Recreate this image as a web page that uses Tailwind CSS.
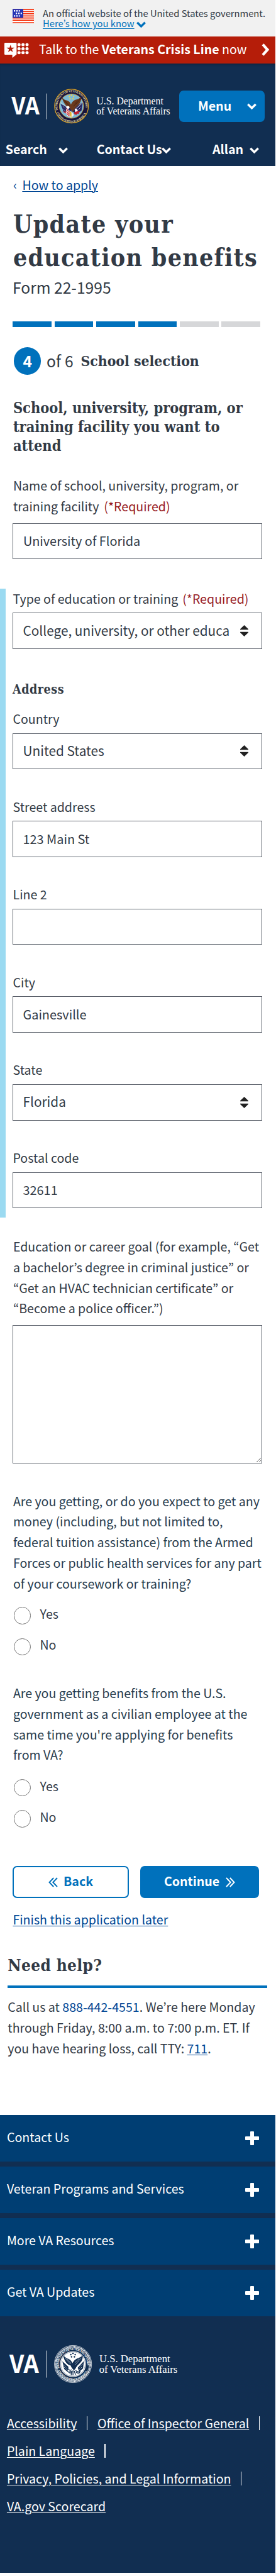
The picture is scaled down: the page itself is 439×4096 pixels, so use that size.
<!DOCTYPE html>
<html lang="en">
<head>
<meta charset="utf-8">
<title>Update your education benefits</title>
<script src="https://cdn.jsdelivr.net/npm/@tailwindcss/browser@4"></script>
</head>
<body class="bg-white">
<svg width="0" height="0" class="absolute">
  <symbol id="chev" viewBox="0 0 15 10"><path d="M1.3 1.7 7.5 7.9 13.7 1.7" fill="none" stroke="currentColor" stroke-width="3.4"/></symbol>
  <symbol id="sort" viewBox="0 0 13 18"><path d="M6.5 0 13 6.2V7.2H0V6.2ZM6.5 18 0 11.8V10.8H13V11.8Z" fill="#212121"/></symbol>
  <symbol id="plus" viewBox="0 0 22 22"><path d="M9 0h4a1 1 0 0 1 1 1v7h7a1 1 0 0 1 1 1v4a1 1 0 0 1-1 1h-7v7a1 1 0 0 1-1 1H9a1 1 0 0 1-1-1v-7H1a1 1 0 0 1-1-1V9a1 1 0 0 1 1-1h7V1a1 1 0 0 1 1-1Z" fill="#fff"/></symbol>
</svg>
<div class="flex h-[4096px] w-[437.6px] flex-col overflow-hidden bg-white text-[19.6px] leading-[32.8px] text-[#323a45] [font-family:'Noto_Sans_CJK_KR','Noto_Sans_CJK_SC',sans-serif]">

  <!-- Government banner -->
  <div class="flex h-[57.5px] shrink-0 gap-[14px] bg-[#f1f1f1] pl-[20px]">
    <svg class="mt-[13.5px] h-[23px] w-[34px] shrink-0" viewBox="0 0 34 23">
      <rect width="34" height="23" fill="#fff"/>
      <path d="M0 .9h34M0 4.4h34M0 7.9h34M0 11.4h34M0 14.7h34M0 18.2h34M0 22h34" stroke="#f42c06" stroke-width="1.7"/>
      <rect y=".2" width="17" height="14.2" fill="#2433b5"/>
      <path d="M2 3.2h9.6M5 7.3h9.8M2 11.4h9.6" stroke="#fff" stroke-width="2.4" stroke-dasharray="2.2 1.7" fill="none"/>
    </svg>
    <div class="pt-[12.6px] text-[14.76px] leading-[16.2px] whitespace-nowrap">
      <p>An official website of the United States government.</p>
      <p class="flex items-center gap-[3px] text-[#0071bc]"><a class="underline decoration-[1.4px] underline-offset-2">Here’s how you know</a><svg class="mt-[4px] h-[10px] w-[15px]"><use href="#chev"/></svg></p>
    </div>
  </div>

  <!-- Crisis line -->
  <div class="flex h-[43.7px] shrink-0 items-center bg-[#b51d09] pl-[6.7px] text-white">
    <svg class="mt-[1px] h-[24px] w-[39px]" viewBox="0 0 39 24">
      <path d="M1.2 0h17a1.2 1.2 0 0 1 1.2 1.2V18.5L12.6 24V19H1.2A1.2 1.2 0 0 1 0 17.8V1.2A1.2 1.2 0 0 1 1.2 0Z" fill="#fff"/>
      <path d="M9.7 3.3 11.2 7.7H15.9L12.1 10.5 13.5 15 9.7 12.3 5.9 15 7.3 10.5 3.5 7.7H8.2Z" fill="#b51d09"/>
      <g fill="#fff"><circle cx="23.2" cy="3" r="2.5"/><circle cx="29.6" cy="3" r="2.5"/><circle cx="36" cy="3" r="2.5"/><circle cx="23.2" cy="9.4" r="2.5"/><circle cx="29.6" cy="9.4" r="2.5"/><circle cx="36" cy="9.4" r="2.5"/><circle cx="23.2" cy="15.8" r="2.5"/><circle cx="29.6" cy="15.8" r="2.5"/><circle cx="36" cy="15.8" r="2.5"/></g>
    </svg>
    <p class="-mt-[1px] ml-[16.3px] whitespace-nowrap">Talk to the <b>Veterans Crisis Line</b> now</p>
    <svg class="mr-[8.5px] ml-auto h-[20px] w-[13px]" viewBox="0 0 13 20"><path d="M2 1.6 9.5 10 2 18.4" fill="none" stroke="#fff" stroke-width="4.2"/></svg>
  </div>

  <!-- Header -->
  <header class="flex h-[162.8px] shrink-0 flex-col bg-[#112e51] font-bold text-white shadow-[inset_0_4px_4px_-3px_rgba(0,0,0,0.3)]">
    <div class="flex items-start pt-[37px]">
      <svg class="h-[60px] w-[284.5px] shrink-0" viewBox="0 137 284.5 60">
        <defs>
          <path id="ringTop" d="M-21.6 6.5A22.5 22.5 0 1 1 21.6 6.5"/>
          <path id="ringBot" d="M-25.3 5.5A25.8 25.8 0 0 0 25.3 5.5"/>
        </defs>
        <text x="18.2" y="181.3" font-size="38" font-weight="700" fill="#fff" textLength="44.6" lengthAdjust="spacingAndGlyphs">VA</text>
        <path d="M73.7 147.7V188.6" stroke="#fff" stroke-opacity=".75" stroke-width="1"/>
        <g transform="translate(113.7 167.7)">
          <circle r="27.9" fill="#17143f"/>
          <circle r="26.9" fill="none" stroke="#d6a72a" stroke-width="1.3"/>
          <circle r="19.3" fill="#7db9d6" stroke="#c9a13b" stroke-width=".9"/>
          <g font-family="'Liberation Serif'" font-size="5" font-weight="700" fill="#d9cf9a">
            <text><textPath href="#ringTop" textLength="79">DEPARTMENT OF VETERANS AFFAIRS</textPath></text>
            <text><textPath href="#ringBot" startOffset="5" textLength="59">UNITED STATES OF AMERICA</textPath></text>
          </g>
          <path d="M-17.3-3.5-13 8-7 12 0 9V4L-8 1Z" fill="#252562"/>
          <path d="M18-6 16 7 9 12 2 9 4 2Z" fill="#252562"/>
          <path d="M-14 0l7 6M-15 4l7 5M14-3 8 4M15 2 8 8" stroke="#fff" stroke-width=".9" stroke-dasharray=".9 1.5"/>
          <path d="M-17.5-6-6 3M18.5-6 6 5" stroke="#e8e4d4" stroke-width=".8"/>
          <path d="M-14.5 8.5-8 12-5 5-8 3-9 9ZM14.5 8 9 12.5 4 13 6 8Z" fill="#c3202d"/>
          <path d="M-8 4 0 9 4 14 0 18.5-6 16-9 11Z" fill="#f5f0ee"/>
          <path d="M-7 6-1 11M-8 8.5-2 13.5M-7.5 11.5-3 16M4 10l4 4M8 9.5l4 2.5" stroke="#c3202d" stroke-width="1.3"/>
          <path d="M-15.5-14.5C-13-11-10-9.5-7-9-4-8-2-6-.8-2.5 1-7 3-8.5 6-10 10-11 13-12.5 15.5-14.5 15.8-9 14-4.5 10.5-1.5 8 1 6 2.5 5 5L2 9.5-1 5.5-4 1.5C-8 1.5-13-5-15.5-14.5Z" fill="#6b3a1e"/>
          <path d="M-13-11C-10-6-7-3-3-.5M13.5-11C10-6 7-3 3 0M-10-8.5-5-2M10-9 5-3" stroke="#40200f" stroke-width=".8" fill="none"/>
          <path d="M-8.5 1C-6-1-3.5 0-3 2L-5 5-8 3ZM5 4.5C7 3 10 5 10 7.5L6 9.5Z" fill="#fff"/>
          <path d="M-3 8 0 10 0 19-3 14Z" fill="#e0b52e"/>
          <g fill="#f2d340"><circle cy="-17.3" r="1.2"/><circle cx="-3.4" cy="-15" r="1.1"/><circle cx="3.4" cy="-15" r="1.1"/><circle cx="-2.3" cy="-11.5" r="1.1"/><circle cx="2.3" cy="-11.5" r="1.1"/></g>
        </g>
        <g font-family="'Liberation Serif'" font-size="15.7" font-weight="400" fill="#fff">
          <text x="153.4" y="165.1" textLength="106.5" lengthAdjust="spacingAndGlyphs">U.S. Department</text>
          <text x="153.2" y="181" textLength="117.5" lengthAdjust="spacingAndGlyphs">of Veterans Affairs</text>
        </g>
      </svg>
      <button class="mt-[5.4px] flex h-[50.6px] w-[136.7px] items-center rounded-[7px] bg-[#0071bc] pl-[30.5px] font-bold"><span class="-mt-[1px] w-[77.5px] text-left">Menu</span><svg class="mt-[1px] h-[10px] w-[15px]"><use href="#chev"/></svg></button>
    </div>
    <nav class="mt-[21px] flex h-[36px] items-center">
      <a class="flex w-[145.3px] items-center pl-[8.7px]"><span class="w-[84.5px]">Search</span><svg class="mt-[3px] h-[10px] w-[15px]"><use href="#chev"/></svg></a>
      <a class="flex w-[184px] items-center pl-[8.4px]"><span class="w-[103.7px] whitespace-nowrap">Contact Us</span><svg class="mt-[3px] h-[10px] w-[15px] shrink-0"><use href="#chev"/></svg></a>
      <a class="flex items-center pl-[8.7px]"><span class="w-[58.8px]">Allan</span><svg class="mt-[3px] h-[10px] w-[15px]"><use href="#chev"/></svg></a>
    </nav>
  </header>

  <!-- Title -->
  <div class="mt-[13.7px] flex shrink-0 gap-[10px] pl-[20.9px] text-[#004795]"><span class="w-[4.5px]">‹</span><a class="underline decoration-[1.4px] underline-offset-2">How to apply</a></div>
  <h1 class="mt-[19.2px] mb-[0.5px] shrink-0 pl-[20.9px] text-[39px] leading-[53.4px] font-bold tracking-[1.28px] whitespace-nowrap [font-family:'DejaVu_Serif_Condensed','DejaVu_Serif',serif]">Update your<br>education benefits</h1>
  <p class="mt-[2.6px] shrink-0 pl-[20px] text-[24.64px] leading-[32px]">Form 22-1995</p>

  <!-- Progress -->
  <div class="mt-[39.9px] flex h-[8.3px] shrink-0 gap-[4.8px] pl-[20.4px]">
    <div class="w-[61.6px] bg-[#0071bc]"></div><div class="w-[61.6px] bg-[#0071bc]"></div><div class="w-[61.6px] bg-[#0071bc]"></div><div class="w-[61.6px] bg-[#0071bc]"></div><div class="w-[61.6px] bg-[#d6d7d9]"></div><div class="w-[61.6px] bg-[#d6d7d9]"></div>
  </div>
  <div class="mt-[32.7px] flex h-[44px] shrink-0 items-center pl-[21.8px] text-[24.64px]">
    <span class="flex h-[43.9px] w-[43.7px] items-center justify-center rounded-full bg-[#0071bc] pb-[3px] font-bold text-white">4</span>
    <span class="-mt-[3px] ml-[8.4px] w-[54.6px] tracking-[0.2px]">of 6</span>
    <h2 class="text-[22.8px] font-bold whitespace-nowrap [font-family:'DejaVu_Serif_Condensed','DejaVu_Serif',serif]">School selection</h2>
  </div>
  <h3 class="mt-[38.7px] shrink-0 pl-[20.9px] text-[23.4px] leading-[29.9px] font-bold whitespace-nowrap [font-family:'DejaVu_Serif_Condensed','DejaVu_Serif',serif]">School, university, program, or<br>training facility you want to<br>attend</h3>

  <!-- School name -->
  <label class="mt-[31.3px] shrink-0 pl-[20.9px] whitespace-nowrap">Name of school, university, program, or<br>training facility <span class="ml-[3.5px] text-[#981b1e]">(*Required)</span></label>
  <input class="mt-[9.9px] ml-[20.4px] h-[57.5px] w-[396.8px] shrink-0 border border-[#5b616b] px-[15.5px] pb-[2px] text-[19.9px]" value="University of Florida">

  <!-- Expanded school details -->
  <section class="mt-[46.5px] flex h-[1000.1px] shrink-0 flex-col border-l-[9.5px] border-[#9bdaf1] pl-[11px]">
    <label class="pl-[0.5px] whitespace-nowrap">Type of education or training <span class="ml-[2.5px] text-[#981b1e]">(*Required)</span></label>
    <div class="mt-[6px] flex h-[57.3px] w-[396.8px] shrink-0 items-center justify-between border border-[#5b616b] pr-[21px] pl-[15.5px] text-[20.8px]"><span class="-mt-[2px] whitespace-nowrap">College, university, or other educa</span><svg class="h-[18px] w-[13px]"><use href="#sort"/></svg></div>
    <h4 class="mt-[49.4px] text-[19.5px] leading-[32px] font-bold tracking-[0.55px] [font-family:'DejaVu_Serif_Condensed','DejaVu_Serif',serif]">Address</h4>
    <div class="mt-[13.8px] flex flex-col gap-[43.3px]">
      <div><label class="block pl-[0.5px]">Country</label>
        <div class="mt-[6px] flex h-[57.5px] w-[396.8px] items-center justify-between border border-[#5b616b] pr-[21px] pl-[15.5px] text-[20.8px]"><span class="-mt-[2px]">United States</span><svg class="h-[18px] w-[13px]"><use href="#sort"/></svg></div></div>
      <div><label class="block pl-[0.5px]">Street address</label><input class="mt-[6px] block h-[57.5px] w-[396.8px] border border-[#5b616b] px-[15.5px] pb-[2px] text-[19.9px]" value="123 Main St"></div>
      <div><label class="block pl-[0.5px]">Line 2</label><input class="mt-[6px] block h-[57.5px] w-[396.8px] border border-[#5b616b] px-[15.5px]"></div>
      <div><label class="block pl-[0.5px]">City</label><input class="mt-[6px] block h-[57.5px] w-[396.8px] border border-[#5b616b] px-[15.5px] pb-[2px] text-[19.9px]" value="Gainesville"></div>
      <div><label class="block pl-[0.5px]">State</label>
        <div class="mt-[6px] flex h-[57.5px] w-[396.8px] items-center justify-between border border-[#5b616b] pr-[21px] pl-[15.5px] text-[20.8px]"><span class="-mt-[2px]">Florida</span><svg class="h-[18px] w-[13px]"><use href="#sort"/></svg></div></div>
      <div><label class="block pl-[0.5px]">Postal code</label><input class="mt-[6px] block h-[57.5px] w-[396.8px] border border-[#5b616b] px-[15.5px] pb-[2px] text-[19.9px]" value="32611"></div>
    </div>
  </section>

  <!-- Goal -->
  <label class="mt-[30.2px] shrink-0 pl-[20.9px] whitespace-nowrap">Education or career goal (for example, “Get<br>a bachelor’s degree in criminal justice” or<br>“Get an HVAC technician certificate” or<br>“Become a police officer.”)</label>
  <textarea class="mt-[10px] ml-[20.4px] h-[219.5px] w-[396.8px] shrink-0 border border-[#5b616b]"></textarea>

  <!-- Questions -->
  <p class="mt-[44px] shrink-0 pl-[20.9px] whitespace-nowrap text-[#283c4e]">Are you getting, or do you expect to get any<br>money (including, but not limited to,<br>federal tuition assistance) from the Armed<br>Forces or public health services for any part<br>of your coursework or training?</p>
  <div class="mt-[20.9px] flex shrink-0 flex-col gap-[22.1px] pl-[21.8px]">
    <label class="flex h-[27.2px] items-center gap-[14.2px]"><input type="radio" class="h-[27.2px] w-[27.4px] appearance-none rounded-full border border-[#757575]"><span class="-mt-[5px]">Yes</span></label>
    <label class="flex h-[27.2px] items-center gap-[14.2px]"><input type="radio" class="h-[27.2px] w-[27.4px] appearance-none rounded-full border border-[#757575]"><span class="-mt-[5px]">No</span></label>
  </div>
  <p class="mt-[44px] shrink-0 pl-[20.9px] whitespace-nowrap text-[#283c4e]">Are you getting benefits from the U.S.<br>government as a civilian employee at the<br>same time you're applying for benefits<br>from VA?</p>
  <div class="mt-[22px] flex shrink-0 flex-col gap-[22.1px] pl-[21.8px]">
    <label class="flex h-[27.2px] items-center gap-[14.2px]"><input type="radio" class="h-[27.2px] w-[27.4px] appearance-none rounded-full border border-[#757575]"><span class="-mt-[5px]">Yes</span></label>
    <label class="flex h-[27.2px] items-center gap-[14.2px]"><input type="radio" class="h-[27.2px] w-[27.4px] appearance-none rounded-full border border-[#757575]"><span class="-mt-[5px]">No</span></label>
  </div>

  <!-- Form buttons -->
  <div class="mt-[61.4px] flex h-[50.8px] shrink-0 gap-[17.7px] pl-[20.4px] font-bold">
    <button class="flex w-[184.8px] items-center rounded-[7px] border-[2.7px] border-[#0071bc] pl-[54.3px] text-[#0071bc]"><svg class="mt-[2px] h-[16px] w-[15px]" viewBox="0 0 15 16"><path d="M8.2 1 1.5 8 8.2 15M14 1 7.3 8 14 15" fill="none" stroke="currentColor" stroke-width="1.9"/></svg><span class="-mt-[1px] ml-[9.3px]">Back</span></button>
    <button class="flex w-[188.7px] items-center rounded-[7px] bg-[#0071bc] pl-[38px] text-white"><span class="-mt-[1px] w-[98px] text-left">Continue</span><svg class="mt-[2px] h-[16px] w-[15px]" viewBox="0 0 15 16"><path d="M1 1 7.7 8 1 15M6.8 1 13.5 8 6.8 15" fill="none" stroke="currentColor" stroke-width="1.9"/></svg></button>
  </div>
  <div class="mt-[18.7px] shrink-0 pl-[20.4px]"><a class="text-[#004795] underline decoration-[1.4px] underline-offset-2">Finish this application later</a></div>

  <!-- Help -->
  <section class="mt-[37.5px] ml-[12.3px] w-[413px] shrink-0">
    <h2 class="box-content h-[49px] border-b-4 border-[#0071bc] pb-[1px] text-[26px] leading-[36px] font-bold tracking-[0.35px] [font-family:'DejaVu_Serif_Condensed','DejaVu_Serif',serif]">Need help?</h2>
    <p class="mt-[14.4px] whitespace-nowrap">Call us at <a class="text-[#004795]">888-442-4551</a>. We’re here Monday<br>through Friday, 8:00 a.m. to 7:00 p.m. ET. If<br>you have hearing loss, call TTY: <a class="text-[#004795] underline decoration-[1.4px] underline-offset-2">711</a>.</p>
  </section>

  <!-- Footer -->
  <footer class="mt-auto mb-[5.4px] h-[727.9px] shrink-0 bg-[#112e51] text-white">
    <div class="flex flex-col gap-[8.3px]">
      <div class="flex h-[73.8px] items-center justify-between bg-[#003e73] pr-[26px] pl-[10.9px]"><span class="-mt-[3px]">Contact Us</span><svg class="h-[22px] w-[22px]"><use href="#plus"/></svg></div>
      <div class="flex h-[73.8px] items-center justify-between bg-[#003e73] pr-[26px] pl-[10.9px]"><span class="-mt-[3px]">Veteran Programs and Services</span><svg class="h-[22px] w-[22px]"><use href="#plus"/></svg></div>
      <div class="flex h-[73.8px] items-center justify-between bg-[#003e73] pr-[26px] pl-[10.9px]"><span class="-mt-[3px]">More VA Resources</span><svg class="h-[22px] w-[22px]"><use href="#plus"/></svg></div>
      <div class="flex h-[73.8px] items-center justify-between bg-[#003e73] pr-[26px] pl-[10.9px]"><span class="-mt-[3px]">Get VA Updates</span><svg class="h-[22px] w-[22px]"><use href="#plus"/></svg></div>
    </div>
    <svg class="mt-[43.8px] block h-[64px] w-[300px]" viewBox="0 26.4 300 64">
      <text x="14.9" y="72.3" font-size="39" font-weight="700" fill="#fff" textLength="47" lengthAdjust="spacingAndGlyphs">VA</text>
      <path d="M73.6 37V80" stroke="#fff" stroke-opacity=".8" stroke-width="1"/>
      <g transform="translate(116.1 58.4)">
        <circle r="29.6" fill="none" stroke="#fff" stroke-width=".7"/>
        <circle r="27.5" fill="none" stroke="#fff" stroke-width="2.2" stroke-dasharray="1.3 .6"/>
        <circle r="25.8" fill="none" stroke="#fff" stroke-width=".5"/>
        <g font-family="'Liberation Serif'" font-size="5" font-weight="700" fill="#fff">
          <text><textPath href="#ringTop" textLength="79">DEPARTMENT OF VETERANS AFFAIRS</textPath></text>
          <text><textPath href="#ringBot" startOffset="5" textLength="59">UNITED STATES OF AMERICA</textPath></text>
        </g>
        <circle r="20.6" fill="#fff"/>
        <circle r="19.4" fill="none" stroke="#112e51" stroke-width=".4"/>
        <path d="M-15.5-14C-12-10-9-9-7-8-4-7-2-4-.8-1.5 1-5 3-7 6-8.5 10-10 13-11.5 15.5-14 15.8-8 14-4 10.5-1 8 1.5 6 3 5 6L1.5 10-2 6-4 2C-9 1.5-14-4-15.5-14Z" fill="#112e51"/>
        <path d="M-13-10-4 0M-10-9-3-1M13-10 4 1M10-9 3-2" stroke="#fff" stroke-width=".5"/>
        <path d="M-17-5-14 8-9 12-7 4ZM17.5-6 16 7 10 12 7 5Z" fill="#112e51"/>
        <path d="M-18-7-3 7M18-7 5 7" stroke="#fff" stroke-width="2"/>
        <path d="M-15 1l6 6M-14 5l4 4M15 0 9 7M14 5l-4 4" stroke="#fff" stroke-width="1" stroke-dasharray="1 1.5"/>
        <path d="M-11 9c3 5 6 4 8 2M-9 6c3 5 5 4 7 3M-7 13c2 2 5 1 6-1M4 10c3 3 6 3 8 1M5 13c2 2 5 2 6 0M-2 11-3 18M0 10V18M2 11 4 17" stroke="#112e51" stroke-width="1.3" fill="none"/>
        <g fill="#112e51"><circle cy="-17" r="1.3"/><circle cx="-3.5" cy="-15" r="1.2"/><circle cx="3.5" cy="-15" r="1.2"/><circle cx="-2.3" cy="-11.5" r="1.2"/><circle cx="2.3" cy="-11.5" r="1.2"/></g>
      </g>
      <g font-family="'Liberation Serif'" font-size="16.6" fill="#fff">
        <text x="157.9" y="55.4" textLength="112.8" lengthAdjust="spacingAndGlyphs">U.S. Department</text>
        <text x="157.7" y="72" textLength="124.6" lengthAdjust="spacingAndGlyphs">of Veterans Affairs</text>
      </g>
    </svg>
    <div class="mt-[40.8px] ml-[10.9px] leading-[43.75px] whitespace-nowrap">
      <div class="flex items-center gap-[15.5px]"><a class="underline decoration-[1.4px] underline-offset-2">Accessibility</a><i class="h-[22px] w-[1.4px] bg-white"></i><a class="underline decoration-[1.4px] underline-offset-2">Office of Inspector General</a><i class="h-[22px] w-[1.4px] bg-white"></i></div>
      <div class="flex items-center gap-[15.5px]"><a class="underline decoration-[1.4px] underline-offset-2">Plain Language</a><i class="h-[22px] w-[1.4px] bg-white"></i></div>
      <div class="flex items-center gap-[15.5px]"><a class="underline decoration-[1.4px] underline-offset-2">Privacy, Policies, and Legal Information</a><i class="h-[22px] w-[1.4px] bg-white"></i></div>
      <div class="flex items-center"><a class="underline decoration-[1.4px] underline-offset-2">VA.gov Scorecard</a></div>
    </div>
  </footer>
</div>
</body>
</html>
